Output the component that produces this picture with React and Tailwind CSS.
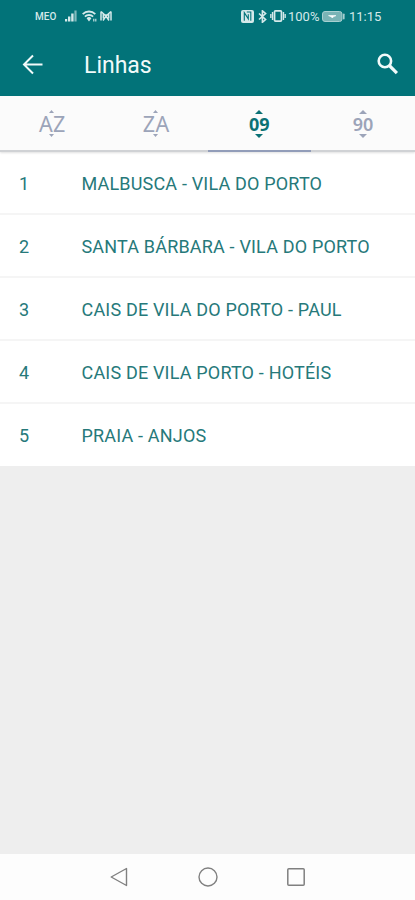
const LINES = [
  { id: 1, name: 'MALBUSCA - VILA DO PORTO' },
  { id: 2, name: 'SANTA BÁRBARA - VILA DO PORTO' },
  { id: 3, name: 'CAIS DE VILA DO PORTO - PAUL' },
  { id: 4, name: 'CAIS DE VILA PORTO - HOTÉIS' },
  { id: 5, name: 'PRAIA - ANJOS' },
];

const TABS = [
  { label: 'AZ', active: false },
  { label: 'ZA', active: false },
  { label: '09', active: true },
  { label: '90', active: false },
];

function StatusBar() {
  return (
    <div className="flex h-8 items-center pl-[35px] pr-[33px] text-[#d5e9ea]">
      <span className="w-[22px] pt-px text-[10px] leading-none font-medium">MEO</span>
      {/* Signal */}
      <svg className="ml-2 h-3 w-3" viewBox="0 0 12 12" fill="currentColor" aria-hidden="true">
        <rect x="0" y="9" width="2.2" height="2.5" />
        <rect x="3" y="6.5" width="2.4" height="5" />
        <rect x="6.2" y="3.5" width="2.4" height="8" />
        <rect x="9.4" y="0.5" width="2.2" height="11" opacity="0.6" />
      </svg>
      {/* Wi-Fi */}
      <svg className="ml-[5px] h-3 w-[15px]" viewBox="0 0 15 12" fill="none" stroke="currentColor" strokeWidth="1.8" aria-hidden="true">
        <path d="M0.7 4.2C4.2 0.6 9.8 0.6 13.3 4.2M2.9 6.7c2.3-2.3 5.9-2.3 8.2 0" />
        <path d="M4.6 8.2 7 11.4l2.4-3.2a3.4 3.4 0 0 0-4.8 0z" fill="currentColor" stroke="none" />
        <path d="M11.8 8.8v2.7M13.8 8.8v2.7" strokeWidth="1.1" />
      </svg>
      {/* Hotspot */}
      <svg className="ml-0.5 h-3 w-[14px]" viewBox="0 0 14 12" fill="none" stroke="currentColor" strokeWidth="1.5" aria-hidden="true">
        <path d="M2 1.5v9M12 1.5v9M4.3 3v5.5M9.7 3v5.5M2 1.5 7 6l5-4.5M7 6l-3 4.5M7 6l3 4.5" />
        <circle cx="7" cy="5.6" r="1.4" fill="currentColor" stroke="none" />
      </svg>

      <div className="ml-auto flex items-center">
        {/* NFC */}
        <svg className="h-[13px] w-[13px]" viewBox="0 0 13 13" aria-hidden="true">
          <rect width="13" height="13" rx="2" fill="currentColor" />
          <path d="M3.3 10.8V2.6l4 6.2V4.2M5.8 2h4v8.8" fill="none" stroke="#027379" strokeWidth="1.1" />
        </svg>
        {/* Bluetooth */}
        <svg className="ml-[4px] h-[13px] w-[9px]" viewBox="0 0 9 13" fill="none" stroke="currentColor" strokeWidth="1.6" aria-hidden="true">
          <path d="M1 3.5l6.6 6-3.2 2.8V.8l3.2 2.7L1 9.5" />
        </svg>
        {/* Vibration */}
        <svg className="ml-[3px] h-3 w-[16px]" viewBox="0 0 16 12" fill="none" stroke="currentColor" strokeWidth="1.8" aria-hidden="true">
          <rect x="4.5" y="0.9" width="7" height="10.2" rx="1" />
          <path d="M2.5 2v8M.8 4v4M13.5 2v8M15.2 4v4" strokeWidth="1.3" />
        </svg>
        <span className="ml-0.5 w-[32px] text-[13px] leading-none">100%</span>
        {/* Battery */}
        <svg className="ml-0.5 h-[11px] w-[23px]" viewBox="0 0 23 11" aria-hidden="true">
          <rect x="0.5" y="0.5" width="19.5" height="10" rx="2.5" fill="#79b4b6" stroke="#a8d0d1" />
          <rect x="21" y="2.5" width="1.6" height="6" rx="0.8" fill="#a8d0d1" />
          <path d="M6.5 4.6h7.5l-2.7 1.2-1 1.2-1.1-1.2z" fill="#fff" stroke="#fff" strokeWidth=".6" />
        </svg>
        <span className="ml-1 w-[33px] text-[13px] leading-none">11:15</span>
      </div>
    </div>
  );
}

function AppBar() {
  return (
    <div className="flex h-16 items-center pl-[22px] pr-4 text-[#f1fafa]">
      <button aria-label="Voltar">
        <svg className="block h-[21px] w-[22px]" viewBox="0 0 22 21" fill="none" stroke="currentColor" strokeWidth="2" aria-hidden="true">
          <path d="M20.5 10.5H2.5M11 1.5l-9 9 9 9" />
        </svg>
      </button>
      <h1 className="ml-[40px] pt-0.5 text-[23px] leading-none">Linhas</h1>
      <button className="ml-auto" aria-label="Procurar">
        <svg className="block h-[22px] w-[22px]" viewBox="0 0 22 22" fill="none" stroke="currentColor" aria-hidden="true">
          <circle cx="7.9" cy="8" r="6.2" strokeWidth="2.6" />
          <path d="m12.3 12.5 7.6 7.6" strokeWidth="3.2" />
        </svg>
      </button>
    </div>
  );
}

function SortTab({ label, active }) {
  const isLetters = label === 'AZ' || label === 'ZA';

  return (
    <button
      className={`
        flex h-full flex-1 flex-col items-center border-b-2
        font-['Noto_Sans','Open_Sans',sans-serif]
        ${isLetters ? 'pt-3.5' : 'pt-[13px]'}
        ${active ? 'border-[#929db9] text-[#0b7175]' : 'border-[#d0d2d5] text-[#9ca4b9]'}
      `}
    >
      <svg
        className={isLetters ? 'h-[3px] w-[5px]' : 'mt-px h-1 w-2'}
        viewBox="0 0 8 5"
        fill="currentColor"
        preserveAspectRatio="none"
        aria-hidden="true"
      >
        <path d="M0 5 4 0l4 5z" />
      </svg>
      <span
        className={
          isLetters
            ? 'pt-px pl-px text-[21.5px] leading-[20px] tracking-[0.3px]'
            : `pt-px text-[18px] leading-[18px] ${active ? 'font-bold' : 'font-semibold'}`
        }
      >
        {label}
      </span>
      <svg
        className={isLetters ? 'h-[3px] w-[5px]' : 'mt-px h-1 w-2'}
        viewBox="0 0 8 5"
        fill="currentColor"
        preserveAspectRatio="none"
        aria-hidden="true"
      >
        <path d="M0 0h8L4 5z" />
      </svg>
    </button>
  );
}

function NavBar() {
  return (
    <div className="flex h-[46px] items-center bg-[#fdfdfd] pl-[110px] text-[#808080]">
      <svg className="h-5 w-[18px]" viewBox="0 0 18 20" fill="none" stroke="currentColor" strokeWidth="1.4" strokeLinejoin="round" aria-hidden="true">
        <path d="M16.5 1.5v17L1.2 10z" />
      </svg>
      <svg className="ml-[70px] h-5 w-5" viewBox="0 0 20 20" fill="none" stroke="currentColor" strokeWidth="1.4" aria-hidden="true">
        <circle cx="10" cy="10" r="9" />
      </svg>
      <svg className="ml-[68px] h-5 w-5" viewBox="0 0 20 20" fill="none" stroke="currentColor" strokeWidth="1.5" aria-hidden="true">
        <rect x="1.8" y="1.8" width="16.4" height="16.4" rx="1" />
      </svg>
    </div>
  );
}

export default function App() {
  return (
    <div className="flex h-[900px] w-[415px] flex-col overflow-hidden bg-[#eeeeee] font-[Roboto,sans-serif]">
      <header className="bg-[#027379]">
        <StatusBar />
        <AppBar />
      </header>

      <nav className="z-10 flex h-14 bg-[#fbfbfb] shadow-[0_1px_2px_rgba(0,0,0,0.12)]">
        {TABS.map((tab) => (
          <SortTab key={tab.label} label={tab.label} active={tab.active} />
        ))}
      </nav>

      <ul className="bg-white">
        {LINES.map((line) => (
          <li
            key={line.id}
            className="flex h-[63px] items-center border-b-2 border-[#f5f5f5] pt-0.5 pl-[19px] text-[18px] tracking-[0.18px] text-[#26797a] last:h-[62px] last:border-b-0 last:pt-0"
          >
            <span className="w-[62.5px]">{line.id}</span>
            <span>{line.name}</span>
          </li>
        ))}
      </ul>

      <div className="flex-1" />
      <NavBar />
    </div>
  );
}
